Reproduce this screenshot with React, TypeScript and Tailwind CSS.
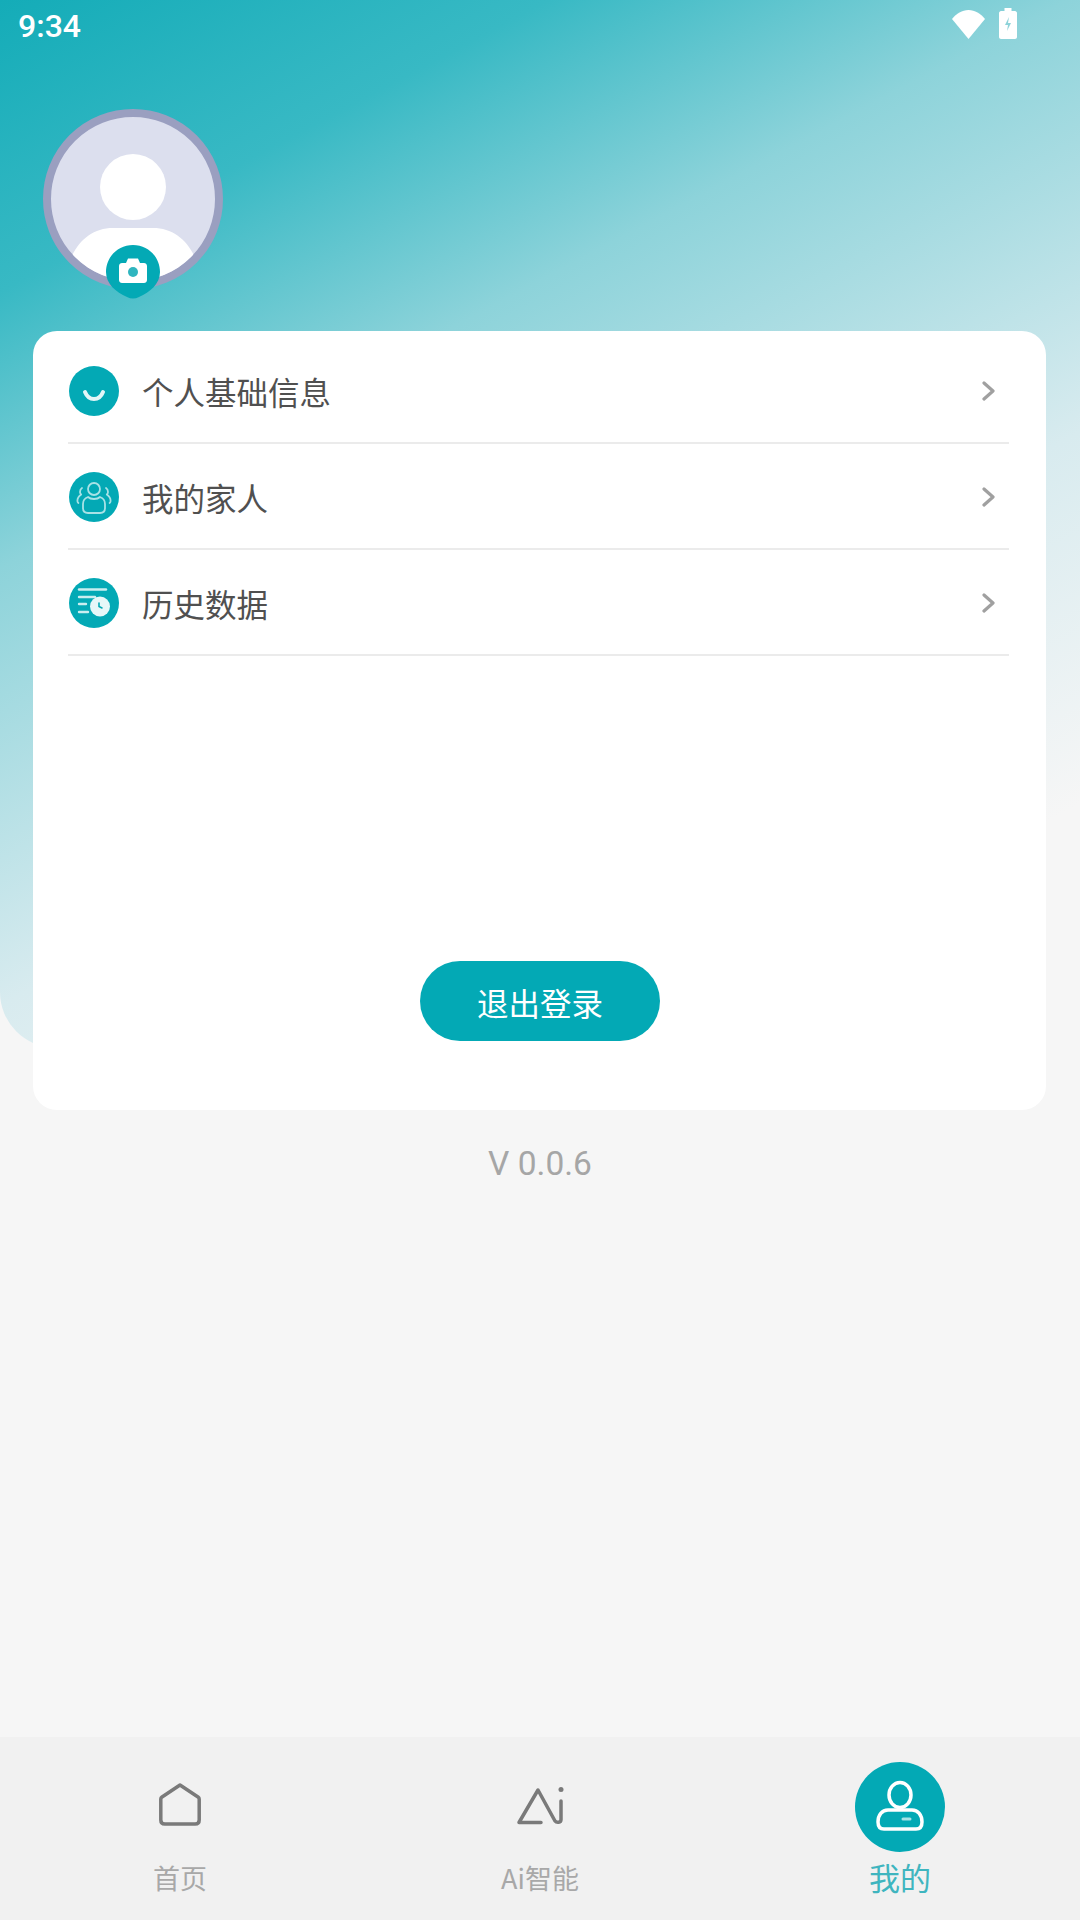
import { FC, ReactNode } from "react"

const TEAL = "#03a9b5"

const IconSmile = () => (
  <svg viewBox="0 0 50 50" className="w-[50px] h-[50px]">
    <circle cx="25" cy="25" r="25" fill={TEAL} />
    <path d="M16 26c2 5 5 7 9 7s7-2 9-7" fill="none" stroke="#e3f6f7" strokeWidth="4" strokeLinecap="round" />
  </svg>
)

const IconFamily = () => (
  <svg viewBox="0 0 50 50" className="w-[50px] h-[50px]" fill="none" stroke="#a8e2e6" strokeWidth="1.800" strokeLinecap="round" strokeLinejoin="round">
    <circle cx="25" cy="25" r="25" fill={TEAL} stroke="none" />
    <circle cx="25" cy="17" r="6" />
    <path d="M19 25c-3 1-5 3.500-5 7v4c0 3 2 5 5 5h12c3 0 5-2 5-5v-4c0-3.500-2-6-5-7-1.500 1.500-3.500 2-6 2s-4.500-.5-6-2z" />
    <path d="M13 16c-1.500 1-2 2.500-2 4 0 1 .5 2 1.200 2.500-2 1.300-3.800 3.500-3.800 6.500 0 .8.300 1.500 1 2" />
    <path d="M37 16c1.500 1 2 2.500 2 4 0 1-.5 2-1.200 2.500 2 1.300 3.800 3.500 3.800 6.500 0 .8-.3 1.500-1 2" />
  </svg>
)

const IconHistory = () => (
  <svg viewBox="0 0 50 50" className="w-[50px] h-[50px]">
    <circle cx="25" cy="25" r="25" fill={TEAL} />
    <g stroke="#c9eef0" strokeWidth="2.400" strokeLinecap="round">
      <path d="M10 11.500h27" />
      <path d="M10 19h16" />
      <path d="M10 26h7" />
      <path d="M10 34h9" />
    </g>
    <circle cx="31" cy="28.500" r="10" fill="#e6f7f8" />
    <path d="M30 25v3.500l3 1.500" fill="none" stroke={TEAL} strokeWidth="1.600" strokeLinecap="round" />
  </svg>
)

const IconChevron = () => (
  <svg viewBox="0 0 13 20" className="w-[13px] h-[20px]" fill="none" stroke="#a0a0a0" strokeWidth="3.200" strokeLinecap="round" strokeLinejoin="round">
    <path d="M2 2l9 8-9 8" />
  </svg>
)

const Avatar = () => (
  <div className="relative w-[180px] h-[180px]">
    <svg viewBox="0 0 180 180" className="w-[180px] h-[180px]">
      <defs>
        <clipPath id="avatar-clip">
          <circle cx="90" cy="90" r="82" />
        </clipPath>
      </defs>
      <circle cx="90" cy="90" r="86" fill="#dcdfee" stroke="#9a9fc0" strokeWidth="8" />
      <circle cx="90" cy="78" r="33" fill="#fff" />
      <path d="M25 190V157C32 134 48 119 70 119h40c22 0 38 15 45 38v33z" fill="#fff" clipPath="url(#avatar-clip)" />
    </svg>
    <div className="absolute left-[63px] top-[136px] w-[54px] h-[54px]">
      <svg viewBox="0 0 54 54" className="w-[54px] h-[54px]">
        <path d="M27 0C42 0 54 12 54 27c0 12-10 20-21 25-4 2-8 2-12 0C10 47 0 39 0 27 0 12 12 0 27 0z" fill={TEAL} />
        <path d="M16 18h4l2-4.500h10l2 4.500h4c1.500 0 3 1 3 3v14c0 2-1.500 3-3 3H16c-1.500 0-3-1-3-3V21c0-2 1.500-3 3-3z" fill="#fff" />
        <circle cx="27" cy="27" r="5" fill="#2fb5bf" />
      </svg>
    </div>
  </div>
)

const Row: FC<{ icon: ReactNode; label: string }> = ({ icon, label }) => (
  <div className="h-[106px] pt-[2px] flex items-center border-b-2 border-[#ebebeb]">
    <div className="ml-[1px] w-[50px] h-[50px]">{icon}</div>
    <span className="ml-[23px] mt-[1px] flex-1 text-[31.500px] leading-none text-[#505050]">{label}</span>
    <div className="mr-[14px] h-[20px]"><IconChevron /></div>
  </div>
)

const NavItem: FC<{ icon: ReactNode; label: string; active?: boolean }> = ({ icon, label, active = false }) => (
  <div className="flex-1 flex flex-col items-center">
    <div className="h-[115px] flex items-end justify-center">{icon}</div>
    <span className={active ? "text-[31px] leading-none text-[#3fb5bf] mt-[9px]" : "text-[27px] leading-none text-[#a8a8a8] mt-[12px]"}>{label}</span>
  </div>
)

export default function App() {
  return (
    <div
      className="relative w-[1080px] h-[1920px] overflow-hidden bg-[#f6f6f6] flex flex-col"
      style={{ fontFamily: '"Noto Sans CJK SC", Roboto, sans-serif' }}
    >
      {/* header gradient sits behind everything */}
      <div className="absolute left-0 top-0 w-[1080px] h-[1048px] rounded-bl-[56px] bg-[linear-gradient(152deg,#14acb8_0%,#38b9c4_18%,#8dd3da_35%,#d8ebef_62%,#f6f6f6_85%)]" />

      <div className="relative h-[52px] flex items-center justify-between pl-[18px] pr-[63px] text-white">
        <span className="text-[32px] font-medium leading-none" style={{ fontFamily: "Roboto, sans-serif" }}>9:34</span>
        <div className="flex items-center gap-[14px] mb-[5px]">
          <svg viewBox="0 0 33 29" className="w-[33px] h-[29px] mt-[1px]">
            <path d="M16.500 29L0 9C4.500 3.500 10 0 16.500 0S28.500 3.500 33 9z" fill="#fff" />
          </svg>
          <svg viewBox="0 0 18 31" className="w-[18px] h-[31px]">
            <path d="M5.500 0h7v3h3.500c1 0 2 1 2 2v24c0 1-1 2-2 2H2c-1 0-2-1-2-2V5c0-1 1-2 2-2h3.500z" fill="#fff" />
            <path d="M10 9l-4 8h3l-1 6 4-8H9z" fill="#8ed3d9" />
          </svg>
        </div>
      </div>

      <div className="relative mt-[57px] ml-[43px]">
        <Avatar />
      </div>

      <div className="relative mt-[42px] ml-[33px] w-[1013px] h-[779px] rounded-[24px] bg-white pl-[35px] pr-[37px] flex flex-col">
        <div className="pt-[7px]">
          <Row icon={<IconSmile />} label="个人基础信息" />
          <Row icon={<IconFamily />} label="我的家人" />
          <Row icon={<IconHistory />} label="历史数据" />
        </div>
        <div className="mt-[305px] pl-[3px] flex justify-center">
          <button className="w-[240px] h-[80px] pt-[3px] rounded-full bg-[#03a9b5] text-white text-[31.500px] leading-none">退出登录</button>
        </div>
      </div>

      <div className="relative mt-[37px] text-center text-[33.500px] leading-none text-[#a6a6a6]" style={{ fontFamily: "Roboto, sans-serif" }}>V 0.0.6</div>

      <div className="relative mt-auto h-[183px] bg-[#f1f1f1] flex">
        <NavItem
          label="首页"
          icon={
            <svg viewBox="0 0 42 43" className="w-[42px] h-[43px] mb-[26px]" fill="none" stroke="#7a7a7a" strokeWidth="3.500" strokeLinejoin="round">
              <path d="M21 2L39 14c.8.6 1.200 1.200 1.200 2v21c0 2.500-1.500 4-4 4H5.800c-2.500 0-4-1.500-4-4V16c0-.8.4-1.400 1.200-2z" />
            </svg>
          }
        />
        <NavItem
          label="Ai智能"
          icon={
            <svg viewBox="0 0 47 38" className="w-[47px] h-[38px] mb-[27px]" fill="none" stroke="#7a7a7a" strokeWidth="3.500" strokeLinecap="round" strokeLinejoin="round">
              <path d="M24 35.500H2L21 3l17 31c1.500 2 6 2 6-1.500V14" />
              <circle cx="44" cy="2.500" r="2.500" fill="#7a7a7a" stroke="none" />
            </svg>
          }
        />
        <NavItem
          active
          label="我的"
          icon={
            <svg viewBox="0 0 90 90" className="w-[90px] h-[90px]" fill="none" stroke="#fff" strokeWidth="3.500" strokeLinecap="round" strokeLinejoin="round">
              <circle cx="45" cy="45" r="45" fill={TEAL} stroke="none" />
              <ellipse cx="45" cy="33" rx="11" ry="12.500" />
              <path d="M33 48h24c6 0 10 5 10 12 0 5-2 7-6 7H29c-4 0-6-2-6-7 0-7 4-12 10-12z" />
              <path d="M48 57h7" strokeWidth="3" stroke="#a8e2e6" />
            </svg>
          }
        />
      </div>
    </div>
  )
}
